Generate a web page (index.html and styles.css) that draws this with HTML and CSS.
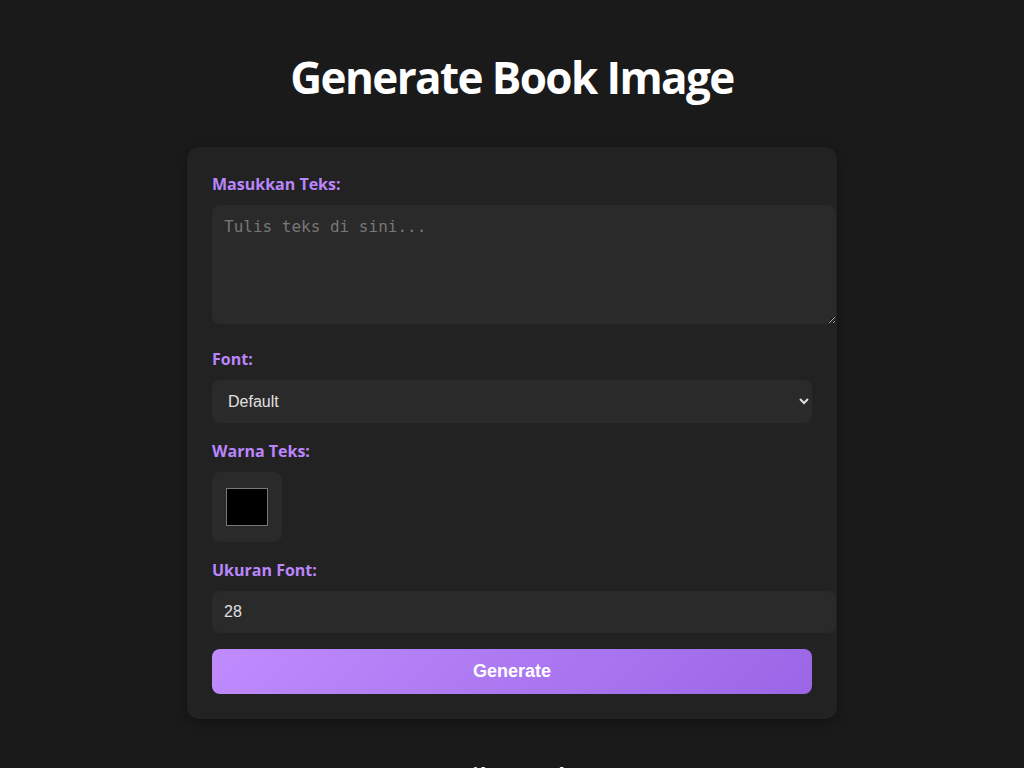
FILE: index.html
```html
<!DOCTYPE html>
<html lang="id">
<head>
    <meta charset="UTF-8">
    <meta name="viewport" content="width=device-width, initial-scale=1.0">
    <title>Generate Book Image</title>
    <link rel="stylesheet" href="styles.css">
</head>
<body>
    <h1>Generate Book Image</h1>

    <div class="card">
        <div class="form-group">
            <label for="text">Masukkan Teks:</label>
            <textarea id="text" placeholder="Tulis teks di sini..."></textarea>
        </div>

        <div class="form-group">
            <label for="font">Font:</label>
            <select id="font">
                <option>Default</option>
                <option>Serif</option>
                <option>Monospace</option>
            </select>
        </div>

        <div class="form-group">
            <label for="color">Warna Teks:</label>
            <input type="color" id="color" value="#000000">
        </div>

        <div class="form-group">
            <label for="size">Ukuran Font:</label>
            <input type="number" id="size" value="28">
        </div>

        <button class="generate-btn">Generate</button>
    </div>

    <h2 class="result-title">Hasil Gambar</h2>
</body>
</html>
```
FILE: styles.css
```css
body {
    font-family: "Open Sans", "Liberation Sans", sans-serif;
    background-color: #1a1a1a;
    color: #e0e0e0;
    margin: 0;
    padding: 48px 20px;
    display: flex;
    flex-direction: column;
    align-items: center;
}
h1 {
    font-size: 44px;
    font-weight: 700;
    line-height: 58px;
    color: #fff;
    margin: 0 0 41px;
    letter-spacing: -1.6px;
}
.card {
    background-color: #222;
    border-radius: 12px;
    box-shadow: 0 4px 12px rgba(0,0,0,0.3);
    padding: 25px;
    width: 600px;
}
.form-group {
    margin-bottom: 16px;
}
label {
    display: block;
    color: #bb86fc;
    font-weight: 700;
    font-size: 16px;
    line-height: 24px;
    margin-bottom: 9px;
}
textarea,
select,
input {
    background-color: #2a2a2a;
    color: #e0e0e0;
    border: none;
    border-radius: 8px;
    padding: 12px;
    font-size: 16px;
}
textarea {
    display: block;
    width: 100%;
    height: 95px;
    margin-bottom: 23px;
    font-family: "DejaVu Sans Mono", monospace;
}
textarea::placeholder {
    color: #777;
}
select {
    display: block;
    width: 100%;
    height: 43px;
    font-family: "Liberation Sans", Arial, sans-serif;
}
input[type="number"] {
    display: block;
    width: 100%;
    height: 18px;
    font-family: "Liberation Sans", Arial, sans-serif;
}
input[type="color"] {
    display: block;
    width: 70px;
    height: 70px;
    cursor: pointer;
}
.generate-btn {
    display: block;
    width: 100%;
    height: 45px;
    border: none;
    border-radius: 8px;
    background: linear-gradient(135deg, #bf8bfd, #9a66e6);
    color: #fff;
    font-family: "Liberation Sans", Arial, sans-serif;
    font-weight: bold;
    font-size: 18px;
    cursor: pointer;
}
.result-title {
    font-size: 28px;
    font-weight: 600;
    color: #fff;
    margin: 40px 0 0;
}
```
